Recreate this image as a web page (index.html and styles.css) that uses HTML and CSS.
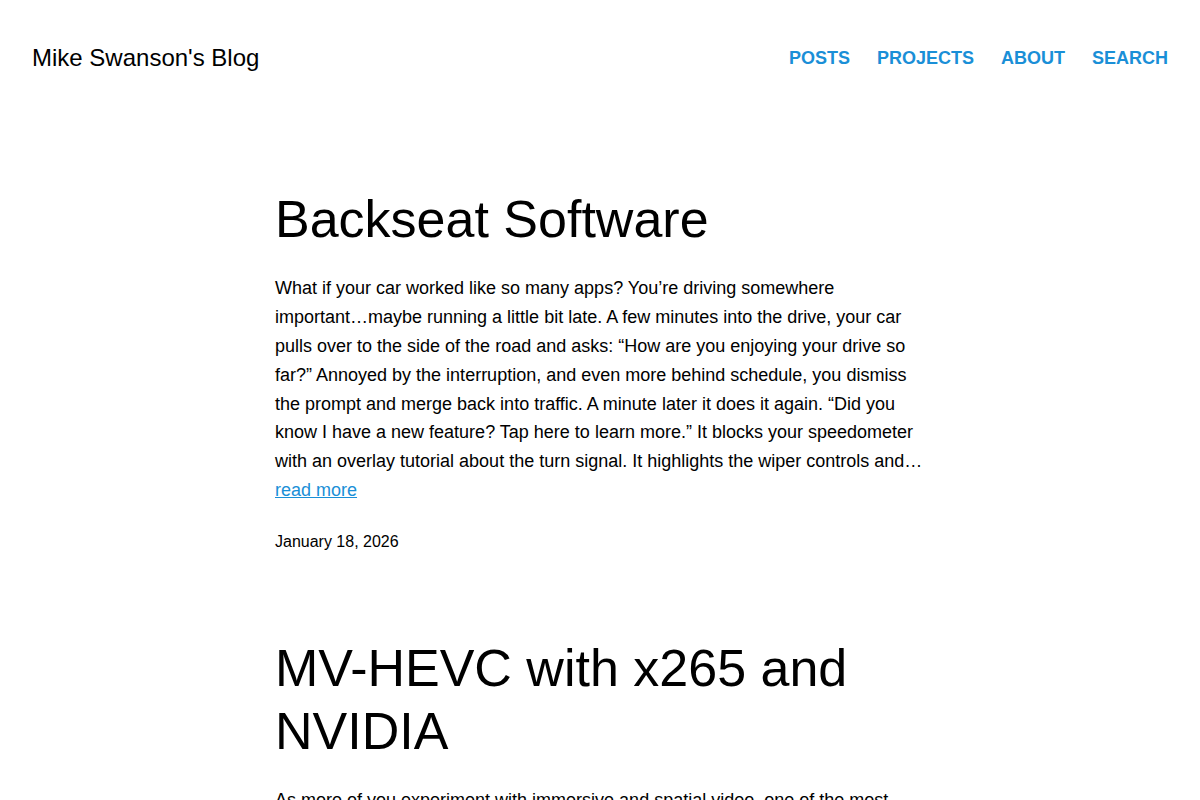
FILE: index.html
```html
<!DOCTYPE html>
<html lang="en">
<head>
<meta charset="utf-8">
<title>Mike Swanson's Blog</title>
<link rel="stylesheet" href="styles.css">
</head>
<body>
<header class="site-header">
  <a class="site-title" href="#">Mike Swanson's Blog</a>
  <nav class="site-nav">
    <a href="#">POSTS</a>
    <a href="#">PROJECTS</a>
    <a href="#">ABOUT</a>
    <a href="#">SEARCH</a>
  </nav>
</header>
<main class="content">
  <article class="post">
    <h2 class="post-title">Backseat Software</h2>
    <p class="post-summary">What if your car worked like so many apps? You’re driving somewhere important…maybe running a little bit late. A few minutes into the drive, your car pulls over to the side of the road and asks: “How are you enjoying your drive so far?” Annoyed by the interruption, and even more behind schedule, you dismiss the prompt and merge back into traffic. A minute later it does it again. “Did you know I have a new feature? Tap here to learn more.” It blocks your speedometer with an overlay tutorial about the turn signal. It highlights the wiper controls and… <a class="read-more" href="#">read more</a></p>
    <div class="post-date">January 18, 2026</div>
  </article>
  <article class="post">
    <h2 class="post-title">MV-HEVC with x265 and NVIDIA</h2>
    <p class="post-summary">As more of you experiment with immersive and spatial video, one of the most common questions I get is how to encode MV-HEVC without relying on Apple’s tools.</p>
  </article>
</main>
</body>
</html>
```
FILE: styles.css
```css
html, body {
  margin: 0;
  padding: 0;
  background: #ffffff;
  color: #000000;
  font-family: "Liberation Sans", Arial, sans-serif;
}

a {
  color: #1a8fd7;
}

.site-header {
  display: flex;
  justify-content: space-between;
  align-items: center;
  padding: 42px 32px 0 32px;
  height: 32px;
}

.site-title {
  font-size: 24px;
  color: #000000;
  text-decoration: none;
  line-height: 32px;
}

.site-nav {
  display: flex;
  gap: 27px;
}

.site-nav a {
  font-size: 18px;
  font-weight: bold;
  text-decoration: none;
  color: #1a8fd7;
  line-height: 32px;
}

.content {
  max-width: 650px;
  margin: 0 auto;
  padding-top: 114px;
}

.post {
  margin-bottom: 83px;
}

.post-title {
  font-size: 52px;
  font-weight: normal;
  line-height: 62.4px;
  margin: 0 0 24px 0;
}

.post-summary {
  font-size: 18px;
  line-height: 28.8px;
  margin: 0 0 24px 0;
}

.read-more {
  color: #1a8fd7;
}

.post-date {
  font-size: 16px;
  line-height: 25.6px;
}
```
